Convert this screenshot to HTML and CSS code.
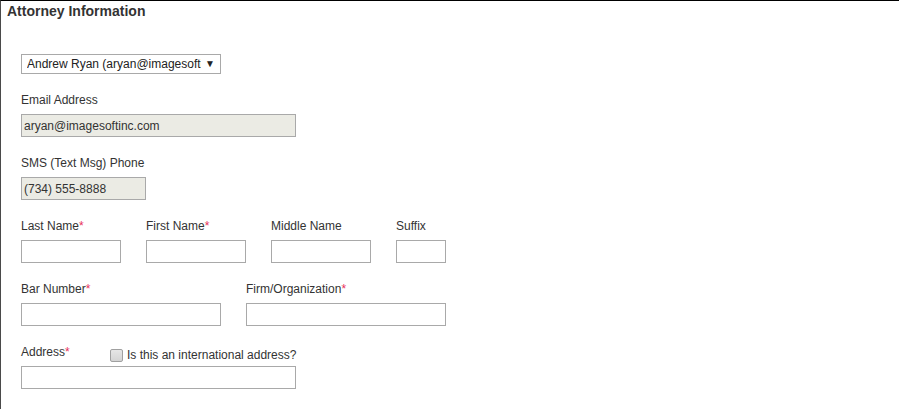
FILE: index.html
```html
<!DOCTYPE html>
<html lang="en">
<head>
<meta charset="utf-8">
<title>Attorney Information</title>
<link rel="stylesheet" href="styles.css">
</head>
<body>
<div class="page">
  <h2 class="title">Attorney Information</h2>
  <form class="form">
    <div class="select">
      <span class="select-text">Andrew Ryan (aryan@imagesoftinc.com)</span>
      <span class="caret">▼</span>
    </div>

    <div class="group">
      <label class="label">Email Address</label>
      <input class="input input-disabled w-275" type="text" value="aryan@imagesoftinc.com" disabled>
    </div>

    <div class="group">
      <label class="label">SMS (Text Msg) Phone</label>
      <input class="input input-disabled w-125" type="text" value="(734) 555-8888" disabled>
    </div>

    <div class="row">
      <div class="field">
        <label class="label">Last Name<span class="req">*</span></label>
        <input class="input w-100" type="text">
      </div>
      <div class="field">
        <label class="label">First Name<span class="req">*</span></label>
        <input class="input w-100" type="text">
      </div>
      <div class="field">
        <label class="label">Middle Name</label>
        <input class="input w-100" type="text">
      </div>
      <div class="field">
        <label class="label">Suffix</label>
        <input class="input w-50" type="text">
      </div>
    </div>

    <div class="row">
      <div class="field">
        <label class="label">Bar Number<span class="req">*</span></label>
        <input class="input w-200" type="text">
      </div>
      <div class="field">
        <label class="label">Firm/Organization<span class="req">*</span></label>
        <input class="input w-200" type="text">
      </div>
    </div>

    <div class="group">
      <div class="addr-head">
        <label class="label addr-label">Address<span class="req">*</span></label>
        <label class="check">
          <input class="checkbox" type="checkbox">
          <span>Is this an international address?</span>
        </label>
      </div>
      <input class="input w-275" type="text">
    </div>
  </form>
</div>
</body>
</html>
```

FILE: styles.css
```css
html, body {
  margin: 0;
  padding: 0;
  background: #fff;
}

body {
  font-family: "Liberation Sans", Arial, sans-serif;
  color: #333;
}

.page {
  box-sizing: border-box;
  height: 409px;
  border-top: 1px solid #000;
  border-left: 1px solid #4a4a4a;
  overflow: hidden;
}

.title {
  margin: 0;
  padding: 2px 0 0 6px;
  font-size: 14px;
  line-height: 16px;
  font-weight: bold;
  color: #333;
}

.form {
  margin-top: 35px;
  padding-left: 20px;
}

.select {
  box-sizing: border-box;
  width: 200px;
  height: 20px;
  border: 1px solid #a9a9a9;
  display: flex;
  align-items: center;
  padding: 0 5px 0 5px;
  font-size: 12px;
  line-height: 14px;
  color: #222;
  margin-bottom: 19px;
}

.select-text {
  flex: 1;
  min-width: 0;
  white-space: nowrap;
  overflow: hidden;
}

.caret {
  flex: none;
  font-size: 10px;
  line-height: 14px;
  margin-left: 4px;
  color: #222;
}

.group {
  margin-bottom: 19px;
}

.group:nth-of-type(1) {
  margin-bottom: 18px;
}

.row {
  display: flex;
  gap: 25px;
  margin-bottom: 19px;
}

.field {
  display: flex;
  flex-direction: column;
}

.label {
  display: block;
  font-size: 12px;
  line-height: 14px;
  color: #333;
  margin-bottom: 7px;
  white-space: nowrap;
}

.req {
  color: #e8305a;
}

.input {
  box-sizing: border-box;
  display: block;
  height: 23px;
  margin: 0;
  padding: 0 2px;
  border: 1px solid #a9a9a9;
  border-radius: 0;
  background: #fff;
  font-family: "Liberation Sans", Arial, sans-serif;
  font-size: 12px;
  color: #333;
  outline: none;
}

.input-disabled {
  background: #ebebe4;
  color: #333;
}

.w-275 { width: 275px; }
.w-200 { width: 200px; }
.w-125 { width: 125px; }
.w-100 { width: 100px; }
.w-50 { width: 50px; }

.addr-head {
  display: flex;
  align-items: flex-start;
  margin-bottom: 7px;
}

.addr-label {
  width: 89px;
  margin-bottom: 0;
}

.check {
  display: flex;
  align-items: center;
  gap: 4px;
  margin-top: 3px;
  margin-bottom: -3px;
  font-size: 12px;
  line-height: 14px;
  color: #333;
}

.checkbox {
  appearance: none;
  -webkit-appearance: none;
  box-sizing: border-box;
  width: 13px;
  height: 13px;
  margin: 0;
  border: 1px solid #a0a0a0;
  border-radius: 2px;
  background: linear-gradient(#e6e6e6, #d4d4d4);
}
```
